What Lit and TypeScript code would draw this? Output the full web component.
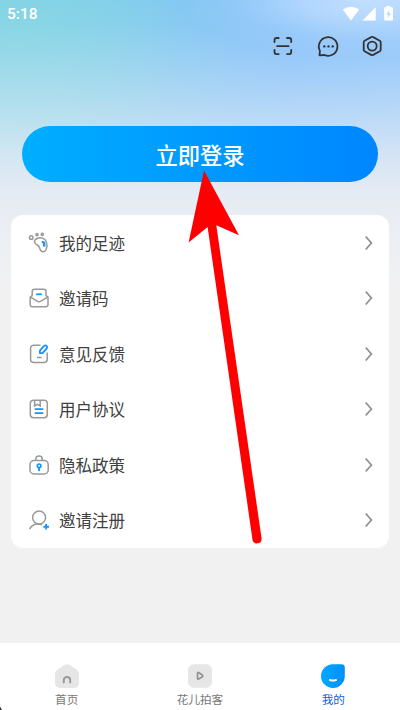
import { LitElement, html, css, svg } from "lit";
import { customElement } from "lit/decorators.js";

const footprint = svg`
  <g fill="none" stroke="#999" stroke-width="1.5">
    <circle cx="2.2" cy="4.5" r="1.8"/><circle cx="8" cy="1.6" r="1.1"/><circle cx="13.3" cy="1.3" r="1.1"/>
    <path d="M6.3 6.6C9 4.1 13.8 3.9 16.2 6.9C18.8 10.1 18.2 15 16.6 17.4C15.2 19.3 12.2 19 11.3 16.9C10.2 14.5 10.6 13.2 8.3 12C5.8 10.8 4.7 8.5 6.3 6.6Z"/>
  </g>
  <path d="M12.9 8.8L15.1 9.7L15.4 13.7" fill="none" stroke="#1295ff" stroke-width="2.3"/>`;
const envelope = svg`
  <g fill="none" stroke="#999" stroke-width="1.5" stroke-linejoin="round">
    <path d="M3.2 8.3V3.6Q3.2 1.3 5.5 1.3H14.7Q17 1.3 17 3.6V8.3"/>
    <path d="M3 7.6L1.2 9V16.5Q1.2 18.8 3.5 18.8H16.7Q19 18.8 19 16.5V9L17.2 7.6"/>
    <path d="M1.5 9.2L8.6 13.3Q10 14.1 11.5 13.3L18.7 9.2"/>
  </g>
  <path d="M7.2 6.3H12.8" stroke="#1295ff" stroke-width="1.8"/>`;
const feedback = svg`
  <path d="M11.5 1.3H5Q1.6 1.3 1.6 4.3V15.5Q1.6 18.5 5 18.5H15Q18.2 18.5 18.2 15.5V8.6M8 13.6H12.6" fill="none" stroke="#999" stroke-width="1.5"/>
  <path d="M10.9 9.2V6.6L14.8 2.1Q16.2 .8 17.6 1.9Q18.8 3.2 17.6 4.6L13.5 9.2Z" fill="none" stroke="#1295ff" stroke-width="1.8" stroke-linejoin="round"/>`;
const agreement = svg`
  <g fill="none" stroke="#999" stroke-width="1.5">
    <rect x="1.3" y="1.2" width="17" height="17.6" rx="3.2"/>
    <path d="M5.6 1.5V7L8.4 5.3L11.2 7V1.5"/>
  </g>
  <path d="M5.7 10.2H14.3M5.7 14.2H14.3" stroke="#1295ff" stroke-width="1.8"/>`;
const lock = svg`
  <g fill="none" stroke="#999" stroke-width="1.5">
    <rect x="1" y="5.6" width="18.2" height="13.4" rx="4"/>
    <path d="M6.8 5.4V4.2Q6.8 1 10.1 1Q13.3 1 13.3 4.2V5.4"/>
  </g>
  <circle cx="10.1" cy="10.8" r="1.8" fill="none" stroke="#1295ff" stroke-width="1.7"/>
  <path d="M10.1 12.6V16.1" stroke="#1295ff" stroke-width="1.9"/>`;
const register = svg`
  <g fill="none" stroke="#999" stroke-width="1.5">
    <circle cx="10.1" cy="7.6" r="6.5"/>
    <path d="M.6 19.2Q3.3 14 8.9 14.1Q11.3 14 13 14.9"/>
  </g>
  <path d="M14.3 16.8H20M17.1 14V19.6" stroke="#1295ff" stroke-width="1.9"/>`;

const rows = [
  { label: "我的足迹", icon: footprint },
  { label: "邀请码", icon: envelope },
  { label: "意见反馈", icon: feedback },
  { label: "用户协议", icon: agreement },
  { label: "隐私政策", icon: lock },
  { label: "邀请注册", icon: register },
];

@customElement("app-root")
export class AppRoot extends LitElement {
  static styles = css`
    :host {
      display: block;
      position: relative;
      width: 400px;
      height: 710px;
      overflow: hidden;
      font-family: "Noto Sans CJK SC", sans-serif;
    }
    svg { display: block; flex: none; }
    .page {
      height: 100%;
      display: flex;
      flex-direction: column;
      background:
        linear-gradient(180deg, rgba(235,240,246,0) 0, rgba(230,238,245,.05) 25px, rgba(228,237,245,.26) 66px, rgba(226,236,244,.52) 110px, rgba(226,234,244,.84) 155px, #e5ebf3 192px, #ebeff4 230px, #f1f1f1 290px),
        radial-gradient(ellipse 190px 58px at 370px 0, rgba(205,228,255,.85) 0, rgba(200,226,255,.65) 35%, rgba(190,220,255,.2) 72%, rgba(190,220,255,0) 100%),
        radial-gradient(ellipse 220px 240px at 20px 25px, rgba(132,213,227,.95) 0, rgba(132,213,228,.65) 40%, rgba(132,210,232,.2) 75%, rgba(130,210,230,0) 100%),
        linear-gradient(100deg, #83cdee 0, #84c4f6 42%, #83c0fb 58%, #90c5fd 100%);
    }
    .status {
      height: 27px;
      padding: 0 7px;
      display: flex;
      align-items: center;
      justify-content: space-between;
      box-sizing: border-box;
    }
    .time { font: 500 15.5px/28px Roboto, sans-serif; color: #fff; }
    .tools {
      display: flex;
      justify-content: flex-end;
      gap: 20.5px;
      height: 24px;
      padding: 7px 16px 0 0;
    }
    .login {
      margin: 68px 22px 0;
      height: 56px;
      flex: none;
      border-radius: 28px;
      background: linear-gradient(90deg, #00aeff, #0086ff);
      color: #fff;
      font-size: 22.3px;
      font-weight: 500;
      line-height: 56px;
      text-align: center;
    }
    .card {
      margin: 33px 11px 0;
      height: 333px;
      flex: none;
      border-radius: 12px;
      background: #fff;
      display: grid;
      grid-template-rows: repeat(6, 1fr);
    }
    .row { display: flex; align-items: center; padding: 0 15px 0 18px; }
    .label { flex: 1; margin-left: 10px; font-size: 16.5px; line-height: 24px; color: #404040; }
    .nav {
      margin-top: auto;
      height: 67px;
      background: #fff;
      display: grid;
      grid-template-columns: repeat(3, 1fr);
      color: #777;
      font-size: 11.6px;
      line-height: 16px;
    }
    .tab { display: flex; flex-direction: column; align-items: center; padding-top: 21px; gap: 3px; }
    .active { color: #1261e0; }
    .arrow { position: absolute; left: 0; top: 0; pointer-events: none; }
  `;

  render() {
    return html`
      <div class="page">
        <div class="status">
          <span class="time">5:18</span>
          <svg width="51" height="16" viewBox="0 0 51 16" fill="#fff">
            <path d="M.8 3.5Q9 -2.2 17.2 3.5L9 14.5Z"/>
            <path d="M33.7 1.3V14.5H20.5Z"/>
            <path fill-rule="evenodd" d="M44.5 0H48.2V1.3H50Q51 1.3 51 2.3V13.6Q51 14.6 50 14.6H43.2Q42.2 14.6 42.2 13.6V2.3Q42.2 1.3 43.2 1.3H44.5ZM47.4 3.7L44.2 8.4H46.2L45.6 12.2L49 7.2H46.9Z"/>
          </svg>
        </div>
        <div class="tools">
          <svg width="24" height="24" viewBox="0 0 24 24" fill="none" stroke="#333" stroke-width="1.8" stroke-linecap="round">
            <path d="M3.5 8V6Q3.5 4 5.5 4H7.7M16 4H18.2Q20.2 4 20.2 6V8M3.5 15.8V18.1Q3.5 20.1 5.5 20.1H7.7M16 20.1H18.2Q20.2 20.1 20.2 18.1V15.8M6.1 12.2H17.6"/>
          </svg>
          <svg width="24" height="24" viewBox="0 0 24 24">
            <path d="M3.9 16.8A9.3 9.3 0 1 1 8.4 21L3.5 21.4Z" fill="none" stroke="#333" stroke-width="1.8" stroke-linejoin="round"/>
            <g fill="#333"><circle cx="8.3" cy="12.4" r="1.2"/><circle cx="12.5" cy="12.4" r="1.2"/><circle cx="16.7" cy="12.4" r="1.2"/></g>
          </svg>
          <svg width="24" height="24" viewBox="0 0 24 24" fill="none" stroke="#333" stroke-width="1.8" stroke-linejoin="round">
            <path d="M11.2 3.1Q12.2 2.5 13.2 3.1L19.8 6.8Q20.7 7.3 20.7 8.3V15.7Q20.7 16.7 19.8 17.2L13.2 20.9Q12.2 21.5 11.2 20.9L4.6 17.2Q3.7 16.7 3.7 15.7V8.3Q3.7 7.3 4.6 6.8Z"/>
            <circle cx="12.2" cy="12.1" r="4.5"/>
          </svg>
        </div>
        <div class="login">立即登录</div>
        <div class="card">
          ${rows.map((row) => html`
            <div class="row">
              <svg width="20" height="20" viewBox="0 0 20 20" overflow="visible">${row.icon}</svg>
              <span class="label">${row.label}</span>
              <svg width="10" height="16" viewBox="0 0 10 16" fill="none" stroke="#8e8e8e" stroke-width="1.7">
                <path d="M1.7 1.5L7.4 8L1.7 14.5"/>
              </svg>
            </div>`)}
        </div>
        <div class="nav">
          <div class="tab">
            <svg width="24" height="24" viewBox="0 0 24 24">
              <path d="M9.5 1.1Q12 -.5 14.5 1.1L21.5 5.6Q24 7.2 24 10V18.5Q24 24 18.5 24H5.5Q0 24 0 18.5V10Q0 7.2 2.5 5.6Z" fill="#e6e6e6"/>
              <path d="M8.8 19.3V16.2Q8.8 13 12 13Q15.2 13 15.2 16.2V19.3" fill="none" stroke="#999" stroke-width="1.9"/>
            </svg>
            <span>首页</span>
          </div>
          <div class="tab">
            <svg width="24" height="24" viewBox="0 0 24 24">
              <rect y=".3" width="24" height="23.4" rx="5.5" fill="#e6e6e6"/>
              <path d="M9.5 9.3V14.3Q9.5 15.3 10.5 15.1L14 13.1Q15.4 12 14 10.7L10.5 8.5Q9.5 8.2 9.5 9.3Z" fill="none" stroke="#929292" stroke-width="1.7" stroke-linejoin="round"/>
            </svg>
            <span>花儿拍客</span>
          </div>
          <div class="tab active">
            <svg width="24" height="24" viewBox="0 0 24 24">
              <defs><linearGradient id="drop"><stop stop-color="#00a9ff"/><stop offset="1" stop-color="#0090ff"/></linearGradient></defs>
              <path d="M11.8 .2H20.5Q23.8 .2 23.8 3.5V12A11.9 11.9 0 1 1 11.8 .2Z" fill="url(#drop)"/>
              <path d="M9 16Q12 17.2 15 16" fill="none" stroke="#fff" stroke-width="2" stroke-linecap="round"/>
            </svg>
            <span>我的</span>
          </div>
        </div>
      </div>
      <svg class="arrow" width="400" height="710" viewBox="0 0 400 710">
        <path d="M204 170.5L239 235.3L216.3 225.3L261.6 538.5A4.6 4.6 0 0 1 252.5 539.7L207.6 227L188.6 242.5Z" fill="#f00"/>
        <path d="M0 706.5L2 710H0Z" fill="#333"/>
      </svg>
    `;
  }
}
